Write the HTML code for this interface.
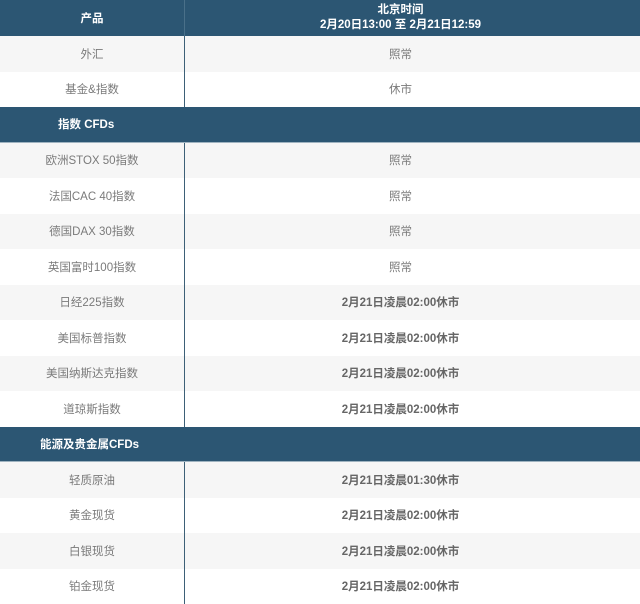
<!DOCTYPE html>
<html><head><meta charset="utf-8"><style>
body{margin:0;width:640px;height:600px;overflow:hidden;background:#fff;font-family:"Liberation Sans","Noto Sans CJK SC",sans-serif;}
table{border-collapse:collapse;width:640px;table-layout:fixed;}
td{height:35.5px;padding:0;text-align:center;font-size:11.5px;color:#7a7a7a;}
td.l{width:184px;border-right:1px solid #3d6077;}
td.r{padding-right:24px;}
tr.h td{background:#2c5673;color:#fff;font-weight:bold;border-right:1px solid #4a7089;}
tr.h td:last-child{border-right:none;}
tr.s td{background:#2c5673;color:#fff;font-weight:bold;text-align:left;padding-left:58px;height:34.5px;border-bottom:1px solid #9fb3c0;}
tr.a td{background:#f6f6f6;}
tr.b td{background:#fff;}
td.v{font-weight:bold;color:#666;}
</style></head><body>
<table>
<tr class="h"><td class="l" style="height:36px">产品</td><td class="r" style="line-height:15px">北京时间<br>2月20日13:00 至 2月21日12:59</td></tr>
<tr class="a"><td class="l">外汇</td><td class="r">照常</td></tr>
<tr class="b"><td class="l">基金&amp;指数</td><td class="r">休市</td></tr>
<tr class="s"><td colspan="2">指数 CFDs</td></tr>
<tr class="a"><td class="l">欧洲STOX 50指数</td><td class="r">照常</td></tr>
<tr class="b"><td class="l">法国CAC 40指数</td><td class="r">照常</td></tr>
<tr class="a"><td class="l">德国DAX 30指数</td><td class="r">照常</td></tr>
<tr class="b"><td class="l">英国富时100指数</td><td class="r">照常</td></tr>
<tr class="a"><td class="l">日经225指数</td><td class="v r">2月21日凌晨02:00休市</td></tr>
<tr class="b"><td class="l">美国标普指数</td><td class="v r">2月21日凌晨02:00休市</td></tr>
<tr class="a"><td class="l">美国纳斯达克指数</td><td class="v r">2月21日凌晨02:00休市</td></tr>
<tr class="b"><td class="l">道琼斯指数</td><td class="v r">2月21日凌晨02:00休市</td></tr>
<tr class="s"><td colspan="2" style="padding-left:40px">能源及贵金属CFDs</td></tr>
<tr class="a"><td class="l">轻质原油</td><td class="v r">2月21日凌晨01:30休市</td></tr>
<tr class="b"><td class="l">黄金现货</td><td class="v r">2月21日凌晨02:00休市</td></tr>
<tr class="a"><td class="l">白银现货</td><td class="v r">2月21日凌晨02:00休市</td></tr>
<tr class="b"><td class="l">铂金现货</td><td class="v r">2月21日凌晨02:00休市</td></tr>
</table>
</body></html>
